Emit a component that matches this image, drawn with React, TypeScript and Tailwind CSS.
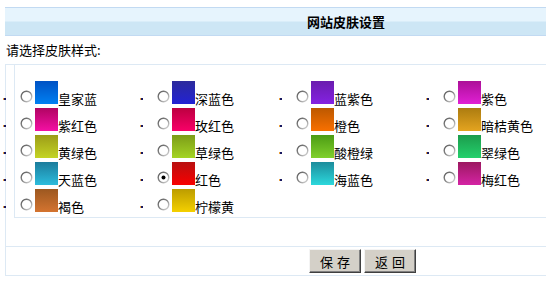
import React from "react"

type Skin = { name: string; from: string; to: string; checked?: boolean }

const skins: Skin[] = [
  { name: "皇家蓝", from: "#0052c4", to: "#0080f2" },
  { name: "深蓝色", from: "#2c2a9c", to: "#2222d4" },
  { name: "蓝紫色", from: "#6a1cae", to: "#8422e2" },
  { name: "紫色", from: "#ac1098", to: "#e020d4" },
  { name: "紫红色", from: "#b00462", to: "#f410a4" },
  { name: "玫红色", from: "#bc0040", to: "#f80068" },
  { name: "橙色", from: "#bc5800", to: "#f87000" },
  { name: "暗桔黄色", from: "#ac7c10", to: "#e4a420" },
  { name: "黄绿色", from: "#9c9c18", to: "#c4d424" },
  { name: "草绿色", from: "#7c9c18", to: "#a4d424" },
  { name: "酸橙绿", from: "#4c9c14", to: "#80d02c" },
  { name: "翠绿色", from: "#1c9c4c", to: "#24d06c" },
  { name: "天蓝色", from: "#1c7c9c", to: "#2cbcdc" },
  { name: "红色", from: "#b81010", to: "#f80000", checked: true },
  { name: "海蓝色", from: "#1c8c9c", to: "#2cd8dc" },
  { name: "梅红色", from: "#9c1860", to: "#d424a4" },
  { name: "褐色", from: "#9c5820", to: "#d47430" },
  { name: "柠檬黄", from: "#bc9c00", to: "#f4d000" },
]

function Radio({ checked }: { checked?: boolean }) {
  return (
    <svg width="13" height="13" viewBox="0 0 13 13" className="shrink-0">
      <defs>
        <linearGradient id="rg" x1="0" y1="0" x2="1" y2="1">
          <stop offset="0" stopColor="#5a5a5a" />
          <stop offset="0.5" stopColor="#8a8a8a" />
          <stop offset="1" stopColor="#e0e0e0" />
        </linearGradient>
      </defs>
      <circle cx="6.5" cy="6.5" r="5.3" fill="#fff" stroke="url(#rg)" strokeWidth="1.4" />
      {checked && <circle cx="6.5" cy="6.5" r="2" fill="#000" />}
    </svg>
  )
}

function Item({ skin }: { skin: Skin }) {
  return (
    <div className="flex items-end h-[23px]">
      <span className="flex mb-[4px] w-[17px] shrink-0">
        <span className="w-[1px] h-[2px] bg-[#e8a040]" />
        <span className="w-[2px] h-[2px] bg-[#181860]" />
      </span>
      <span className="mb-[1px] mr-[2px]">
        <Radio checked={skin.checked} />
      </span>
      <span
        className="w-[23px] h-[23px] shrink-0"
        style={{ background: `linear-gradient(to bottom, ${skin.from}, ${skin.to})` }}
      />
      <span className="text-[13px] leading-[13px] mb-[-1px] whitespace-nowrap">{skin.name}</span>
    </div>
  )
}

export default function App() {
  return (
    <div
      className="w-[546px] h-[289px] overflow-hidden bg-white text-black pt-[7px] pl-[5px]"
      style={{ fontFamily: '"Noto Sans CJK SC", "Noto Sans", sans-serif' }}
    >
      <div className="w-[682px]">
        {/* header */}
        <div className="border-y border-[#c2daf2]">
          <div className="h-[27px] bg-[linear-gradient(to_bottom,#e6f4fd_0,#e6f4fd_13px,#cde6f5_14px,#cde6f5_100%)] flex items-center justify-center">
            <span className="text-[13px] font-bold leading-[13px]">网站皮肤设置</span>
          </div>
        </div>

        {/* prompt */}
        <div className="h-[28px] flex items-center pl-[1px] text-[13px]">请选择皮肤样式:</div>

        {/* body */}
        <div className="border-l border-t border-[#dde9f4]">
          <div className="ml-[8px] border-l border-b border-[#dde9f4] h-[153px] pt-[16px]">
            <div className="ml-[-12px] grid grid-cols-[137px_139px_147px_1fr] gap-y-[4px]">
              {skins.map((s) => (
                <Item key={s.name} skin={s} />
              ))}
            </div>
          </div>
          <div className="h-[29px] border-b border-[#dde9f4]" />
          <div className="h-[29px] border-b border-[#dde9f4] flex items-center gap-[3px] pl-[303px]">
            <button className="w-[52px] h-[24px] bg-[#d4d0c8] border border-t-[#f4f4f4] border-l-[#f4f4f4] border-b-[#404040] border-r-[#404040] shadow-[inset_-1px_-1px_#808080] text-[13px] leading-[13px] tracking-[4px] pl-[4px]">
              保存
            </button>
            <button className="w-[52px] h-[24px] bg-[#d4d0c8] border border-t-[#f4f4f4] border-l-[#f4f4f4] border-b-[#404040] border-r-[#404040] shadow-[inset_-1px_-1px_#808080] text-[13px] leading-[13px] tracking-[4px] pl-[4px]">
              返回
            </button>
          </div>
        </div>
      </div>
    </div>
  )
}
